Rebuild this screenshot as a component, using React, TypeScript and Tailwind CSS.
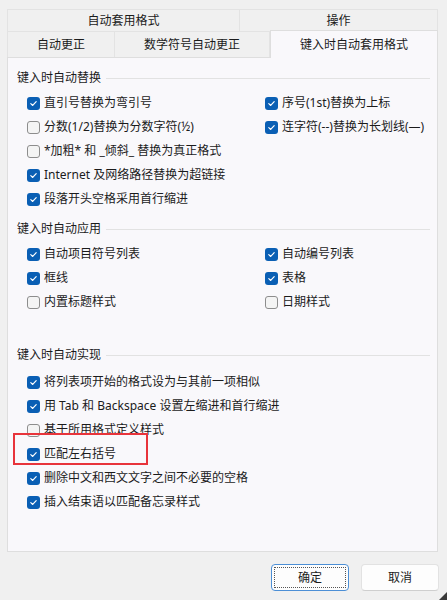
import type { FC } from "react";

const FONT = {
  fontFamily: '"Noto Sans", "Noto Sans CJK SC", sans-serif',
};

type Item = { label: string; checked: boolean };

const Check: FC<{ checked: boolean }> = ({ checked }) =>
  checked ? (
    <span className="flex h-[13px] w-[13px] shrink-0 items-center justify-center rounded-[3px] bg-[#0a5fb4]">
      <svg width="9" height="9" viewBox="0 0 10 10" fill="none">
        <path
          d="M2 5.2 L4.1 7.2 L8 2.9"
          stroke="#ffffff"
          strokeWidth="1.3"
          strokeLinecap="round"
          strokeLinejoin="round"
        />
      </svg>
    </span>
  ) : (
    <span className="h-[13px] w-[13px] shrink-0 rounded-[3px] border border-[#8d8d8d] bg-[#f4f4f4]" />
  );

const Row: FC<{ item: Item }> = ({ item }) => (
  <div className="flex h-[24px] items-center gap-[4px]">
    <Check checked={item.checked} />
    <span className="text-[12px] leading-none text-[#1b1b1b]">{item.label}</span>
  </div>
);

const Header: FC<{ title: string }> = ({ title }) => (
  <div className="flex h-[20px] items-center gap-[5px]">
    <span className="text-[12px] leading-none text-[#1b1b1b]">{title}</span>
    <div className="h-px flex-1 bg-[#e2e2e2]" />
  </div>
);

const TwoCol: FC<{ left: Item[]; right: Item[] }> = ({ left, right }) => (
  <div className="flex pl-[10px]">
    <div className="w-[238px] flex flex-col">
      {left.map((it) => (
        <Row key={it.label} item={it} />
      ))}
    </div>
    <div className="flex flex-col">
      {right.map((it) => (
        <Row key={it.label} item={it} />
      ))}
    </div>
  </div>
);

export default function App() {
  return (
    <div
      className="relative h-[600px] w-[447px] overflow-hidden bg-[#f0f0f0]"
      style={FONT}
    >
      <div className="px-[7px] pt-[9px]">
        {/* tabs row 1 */}
        <div className="flex h-[22px] text-[12px] text-[#1b1b1b]">
          <div className="flex w-[233px] items-center justify-center border border-b-0 border-[#e3e3e3]">
            自动套用格式
          </div>
          <div className="flex w-[198px] items-center justify-center border border-b-0 border-l-0 border-[#e3e3e3]">
            操作
          </div>
        </div>
        {/* tabs row 2 */}
        <div className="relative z-10 flex h-[26px] items-end text-[12px] text-[#1b1b1b]">
          <div className="flex h-[26px] w-[108px] items-center justify-center border border-b-0 border-[#e3e3e3]">
            自动更正
          </div>
          <div className="flex h-[26px] w-[155px] items-center justify-center border border-b-0 border-l-0 border-[#e3e3e3]">
            数学符号自动更正
          </div>
          <div className="flex h-[28px] w-[168px] translate-y-px items-center justify-center border border-b-0 border-[#dedede] bg-[#f9f8fb]">
            键入时自动套用格式
          </div>
        </div>
        {/* panel */}
        <div className="flex h-[495px] w-[431px] flex-col border border-[#dedede] bg-[#f9f8fb] pl-[9px] pr-[7px] pt-[10px]">
          <Header title="键入时自动替换" />
          <div className="mt-[3px]">
            <TwoCol
              left={[
                { label: "直引号替换为弯引号", checked: true },
                { label: "分数(1/2)替换为分数字符(½)", checked: false },
                { label: "*加粗* 和 _倾斜_ 替换为真正格式", checked: false },
                { label: "Internet 及网络路径替换为超链接", checked: true },
                { label: "段落开头空格采用首行缩进", checked: true },
              ]}
              right={[
                { label: "序号(1st)替换为上标", checked: true },
                { label: "连字符(--)替换为长划线(—)", checked: true },
              ]}
            />
          </div>
          <div className="mt-[8px]">
            <Header title="键入时自动应用" />
          </div>
          <div className="mt-[3px]">
            <TwoCol
              left={[
                { label: "自动项目符号列表", checked: true },
                { label: "框线", checked: true },
                { label: "内置标题样式", checked: false },
              ]}
              right={[
                { label: "自动编号列表", checked: true },
                { label: "表格", checked: true },
                { label: "日期样式", checked: false },
              ]}
            />
          </div>
          <div className="mt-[31px]">
            <Header title="键入时自动实现" />
          </div>
          <div className="mt-[5px] flex flex-col pl-[10px]">
            <Row item={{ label: "将列表项开始的格式设为与其前一项相似", checked: true }} />
            <Row item={{ label: "用 Tab 和 Backspace 设置左缩进和首行缩进", checked: true }} />
            <Row item={{ label: "基于所用格式定义样式", checked: false }} />
            <Row item={{ label: "匹配左右括号", checked: true }} />
            <Row item={{ label: "删除中文和西文文字之间不必要的空格", checked: true }} />
            <Row item={{ label: "插入结束语以匹配备忘录样式", checked: true }} />
          </div>
        </div>
      </div>

      {/* buttons */}
      <div className="mt-[12px] flex justify-end gap-[12px] pr-[8px]">
        <button
          type="button"
          className="flex h-[27px] w-[78px] items-center justify-center rounded-[4px] border border-[#4c8fd6] bg-[#fdfdfd] p-[2px] text-[12px] text-[#1b1b1b]"
        >
          <span className="flex h-full w-full items-center justify-center border border-dotted border-[#555555]">
            确定
          </span>
        </button>
        <button
          type="button"
          className="flex h-[27px] w-[78px] items-center justify-center rounded-[4px] border border-[#e2e2e2] border-b-[#cfcfcf] bg-[#fdfdfd] text-[12px] text-[#1b1b1b]"
        >
          取消
        </button>
      </div>

      {/* highlight annotation */}
      <div className="pointer-events-none absolute left-[13px] top-[433px] h-[32px] w-[135px] border-2 border-[#e8343b]" />

      {/* resize grip */}
      <svg
        className="absolute bottom-0 right-0"
        width="8"
        height="8"
        viewBox="0 0 8 8"
      >
        <path d="M8 0 L8 8 L0 8 Z" fill="#3a3a3a" />
      </svg>
    </div>
  );
}
